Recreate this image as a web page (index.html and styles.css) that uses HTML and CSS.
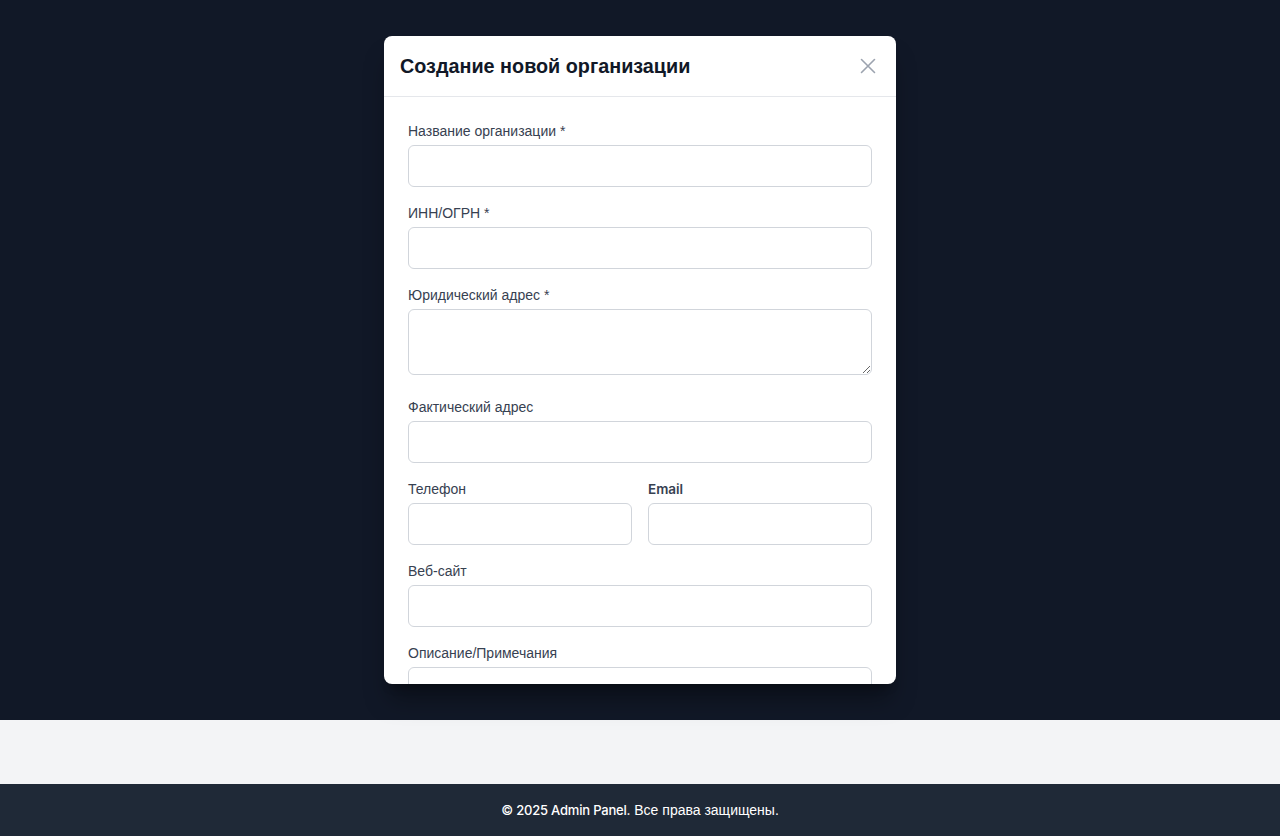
FILE: index.html
```html
<!DOCTYPE html>
<html lang="ru">
<head>
<meta charset="utf-8">
<title>Создание новой организации</title>
<link rel="stylesheet" href="styles.css">
</head>
<body>
<div class="backdrop">
  <div class="modal">
    <div class="modal-header">
      <h2 class="modal-title">Создание новой организации</h2>
      <button class="close" type="button" aria-label="Закрыть">
        <svg width="24" height="24" viewBox="0 0 24 24" fill="none" stroke="currentColor" stroke-width="1.6" stroke-linecap="round"><path d="M5.5 5.5l13 13M18.5 5.5l-13 13"/></svg>
      </button>
    </div>
    <div class="modal-body">
      <div class="field">
        <label class="label">Название организации *</label>
        <input class="input" type="text">
      </div>
      <div class="field">
        <label class="label">ИНН/ОГРН *</label>
        <input class="input" type="text">
      </div>
      <div class="field">
        <label class="label">Юридический адрес *</label>
        <textarea class="input textarea" rows="3"></textarea>
      </div>
      <div class="field">
        <label class="label">Фактический адрес</label>
        <input class="input" type="text">
      </div>
      <div class="row">
        <div class="field">
          <label class="label">Телефон</label>
          <input class="input" type="text">
        </div>
        <div class="field">
          <label class="label latin">Email</label>
          <input class="input" type="email">
        </div>
      </div>
      <div class="field">
        <label class="label">Веб-сайт</label>
        <input class="input" type="text">
      </div>
      <div class="field">
        <label class="label">Описание/Примечания</label>
        <textarea class="input textarea" rows="3"></textarea>
      </div>
    </div>
  </div>
</div>
<div class="spacer"></div>
<footer class="footer"><span class="latin">© 2025 Admin Panel.</span> Все права защищены.</footer>
</body>
</html>
```
FILE: styles.css
```css
* { box-sizing: border-box; }
html, body { margin: 0; padding: 0; }
body {
  font-family: "Liberation Sans", Arial, sans-serif;
  background: #f3f4f6;
  color: #111827;
}
.backdrop {
  height: 720px;
  background: #111827;
  display: flex;
  justify-content: center;
  align-items: flex-start;
  padding-top: 36px;
}
.modal {
  width: 512px;
  height: 648px;
  background: #fff;
  border-radius: 8px;
  box-shadow: 0 20px 25px -5px rgba(0,0,0,0.35), 0 8px 10px -6px rgba(0,0,0,0.3);
  display: flex;
  flex-direction: column;
  overflow: hidden;
}
.modal-header {
  height: 61px;
  flex: none;
  display: flex;
  align-items: center;
  justify-content: space-between;
  padding: 0 16px;
  border-bottom: 1px solid #e5e7eb;
}
.modal-title {
  margin: 0;
  font-size: 19.8px;
  font-weight: 700;
  color: #111827;
  line-height: 28px;
}
.close {
  border: 0;
  background: none;
  padding: 0;
  color: #9ca3af;
  display: flex;
  cursor: pointer;
}
.modal-body {
  flex: 1;
  overflow: hidden;
  padding: 24px 24px 0;
}
.field { margin-bottom: 16px; }
.row {
  display: grid;
  grid-template-columns: 1fr 1fr;
  gap: 16px;
}
.label {
  display: block;
  font-size: 14px;
  line-height: 20px;
  color: #374151;
  margin-bottom: 4px;
}
.label.latin {
  font-family: Inter, "Liberation Sans", sans-serif;
  font-weight: 600;
  font-size: 13.5px;
}
.input {
  display: block;
  width: 100%;
  height: 42px;
  border: 1px solid #d1d5db;
  border-radius: 6px;
  background: #fff;
  font: inherit;
  margin: 0;
}
.textarea {
  height: 66px;
  resize: vertical;
  margin-bottom: 22px;
}
.field:has(.textarea) { margin-bottom: 0; }
.spacer { height: 64px; background: #f3f4f6; }
.footer {
  height: 52px;
  background: #1f2937;
  color: #fff;
  font-size: 14px;
  display: flex;
  align-items: center;
  justify-content: center;
  gap: 4px;
}
.footer .latin {
  font-family: Inter, "Liberation Sans", sans-serif;
  font-weight: 500;
  font-size: 13px;
  letter-spacing: -0.2px;
}
```
